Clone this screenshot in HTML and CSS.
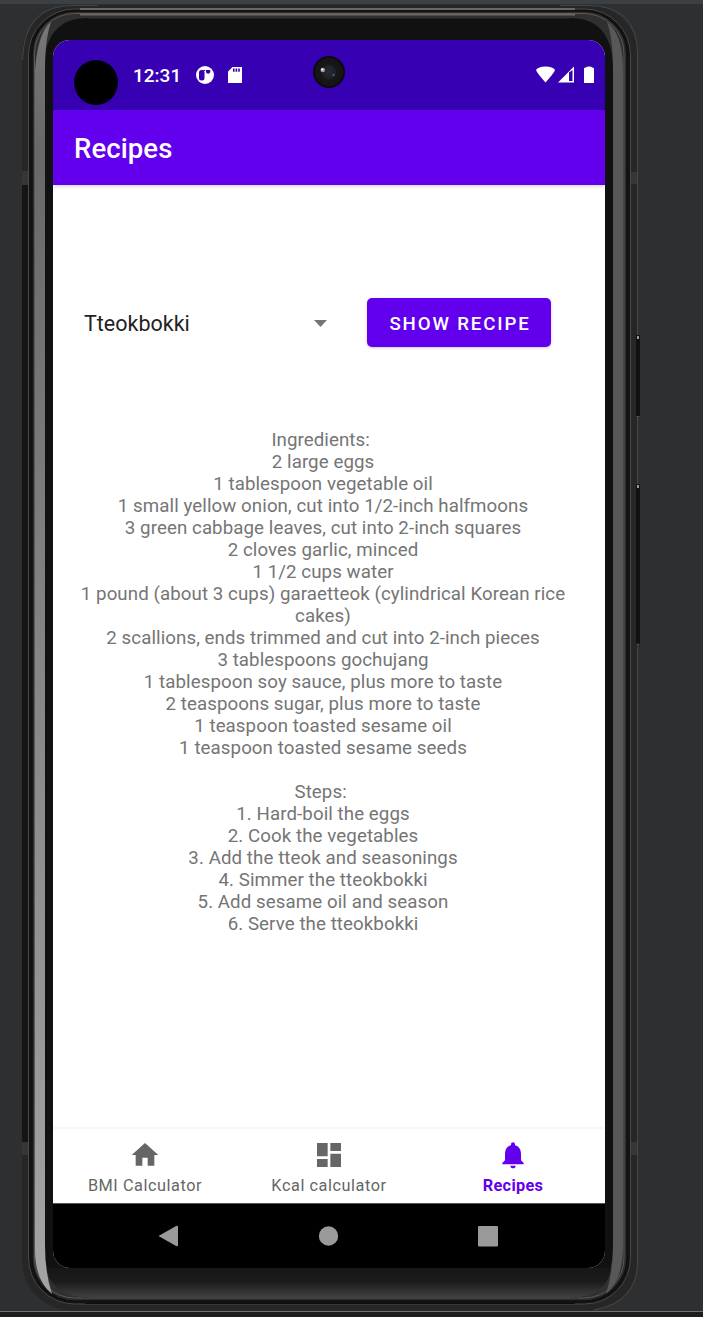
FILE: index.html
```html
<!DOCTYPE html>
<html lang="en">
<head>
<meta charset="utf-8">
<title>Recipes</title>
<link rel="stylesheet" href="styles.css">
</head>
<body>
<div class="stage">
<svg class="device" viewBox="0 0 703 1317" aria-hidden="true">
  <defs>
    <linearGradient id="shine" x2="0" y2="1"><stop offset="0" stop-color="#777"/><stop offset=".1" stop-color="#686868"/><stop offset=".5" stop-color="#858585"/><stop offset="1" stop-color="#a4a4a4"/></linearGradient>
    <linearGradient id="chin" x2="0" y2="1"><stop offset="0" stop-color="#171717"/><stop offset=".45" stop-color="#1b1b1b"/><stop offset="1" stop-color="#424242"/></linearGradient>
    <radialGradient id="lens"><stop offset="0" stop-color="#292934"/><stop offset=".45" stop-color="#202028"/><stop offset=".5" stop-color="#18181a"/><stop offset="1" stop-color="#131313"/></radialGradient>
  </defs>
  <rect width="703" height="4" fill="#3d4042"/>
  <rect x="22" y="5" width="616" height="1305.5" rx="50" fill="#262626"/>
  <path d="M22.500 60Q24 5.500 72 5.500H98M560 5.500H588Q637.500 5.500 637.500 54V1262Q637.500 1302 594 1310" fill="none" stroke="#464646"/>
  <path d="M22 185V1142H28V185Z" fill="#151515"/>
  <path d="M22 171h6v14h-6zM630 172h7v12h-7zM22 1142h6v13h-6zM630 1142h7v13h-7z" fill="#363636"/>
  <rect x="28.500" y="9" width="602" height="1295" rx="46" fill="#141414" stroke="#484848"/>
  <rect x="32" y="11" width="595" height="1290" rx="43" fill="#2c2c2c" stroke="#101010" stroke-width="1.500"/>
  <rect x="34.500" y="13.500" width="589.500" height="1284.500" rx="40" fill="#303030" stroke="#595959"/>
  <path d="M80 9H575M80 14.500H575" fill="none" stroke="#686868" stroke-width="2"/>
  <path d="M44 70Q44 18 88 18H570Q613 18 613 70V1246Q613 1298 568 1298H92Q44 1298 44 1246Z" fill="#111"/>
  <path d="M46 1268H611Q607 1298 568 1298H92Q52 1298 46 1268Z" fill="url(#chin)"/>
  <path d="M35 70Q38 32 51 22Q45 39 45 70V1245Q45 1273 52 1294Q35 1280 35 1250Z" fill="url(#shine)"/>
  <path d="M613 70Q613 38 607 22Q623 34 623 70V1246Q623 1280 606 1294Q613 1272 613 1246Z" fill="#585858"/>
  <path d="M88 18H570" stroke="#333"/>
  <path d="M85 1299.500H575" stroke="#2b2b2b"/>
  <path d="M85 1303.500H575" stroke="#0d0d0d"/>
  <rect x="636" y="335" width="4" height="82" rx="1" fill="#111"/><rect x="637" y="336" width="2" height="3" fill="#999"/><path d="M636.500 416.500h3" stroke="#555"/>
  <rect x="636" y="484" width="4" height="163" rx="1" fill="#111"/><rect x="637" y="485" width="2" height="3" fill="#999"/><path d="M636.500 645h3" stroke="#444" stroke-width="3"/>
  <rect y="1312" width="703" height="5" fill="#1d1d1d"/>
  <rect y="1311" width="703" height="1" fill="#707171"/>
</svg>
<main class="screen">
  <header class="status">
    <span class="cutout"></span>
    <span class="clock">12:31</span>
    <svg class="notify" viewBox="0 0 18 18"><circle cx="9" cy="9" r="9" fill="#fff"/><g fill="#3700b3"><rect x="3" y="4" width="5.500" height="10.500" rx="2.500"/><path d="M10 4h4.300v2a2.200 2.200 0 0 1-4.300 0Z"/><rect x="7.300" y="4" width="2" height="1"/></g></svg>
    <svg class="sd" viewBox="0 0 14 16"><path d="M4.500 0H14V16H0V4.500Z" fill="#fff"/><path d="M5 1.500h1.600v3.300H5zM7.600 1.500h1.600v3.300H7.600zM10.200 1.500h1.600v3.300h-1.600z" fill="#3700b3"/></svg>
    <svg class="camera" viewBox="0 0 32 32"><circle cx="16" cy="16" r="16" fill="#090909"/><circle cx="16" cy="16" r="14.500" fill="url(#lens)"/><circle cx="9.800" cy="14" r="2.300" fill="#9b9b98"/><circle cx="9.300" cy="13.600" r="1" fill="#fff"/><circle cx="20.500" cy="19" r="1.200" fill="#315c96"/></svg>
    <svg class="signals" viewBox="0 0 59 18"><path d="M0 4Q2 .500 9.500 .500T19 4Q18 7 9.500 16.500Q1 7 0 4Z" fill="#fff"/><path fill-rule="evenodd" d="M38 .500V16.500H22ZM33 6.500V15H36.500V4Z" fill="#fff"/><path d="M48 2.500Q48 1.500 50 1.500Q50 .500 53 .500T56 1.500Q58 1.500 58 2.500V17H48Z" fill="#fff"/></svg>
  </header>
  <div class="appbar">Recipes</div>
  <section class="content">
    <div class="controls">
      <div class="spinner"><span>Tteokbokki</span><svg class="caret" viewBox="0 0 13 7"><path d="M0 0H13L6.500 7Z" fill="#757575"/></svg></div>
      <button class="show">SHOW RECIPE</button>
    </div>
    <div class="recipe">Ingredients:&nbsp;
2 large eggs
1 tablespoon vegetable oil
1 small yellow onion, cut into 1/2-inch halfmoons
3 green cabbage leaves, cut into 2-inch squares
2 cloves garlic, minced
1 1/2 cups water
1 pound (about 3 cups) garaetteok (cylindrical Korean rice
cakes)
2 scallions, ends trimmed and cut into 2-inch pieces
3 tablespoons gochujang
1 tablespoon soy sauce, plus more to taste
2 teaspoons sugar, plus more to taste
1 teaspoon toasted sesame oil
1 teaspoon toasted sesame seeds

Steps:&nbsp;
1. Hard-boil the eggs
2. Cook the vegetables
3. Add the tteok and seasonings
4. Simmer the tteokbokki
5. Add sesame oil and season
6. Serve the tteokbokki</div>
  </section>
  <nav class="tabs">
    <div class="tab"><svg viewBox="0 0 24 24"><path d="M10 20v-6h4v6h5v-8h3L12 3 2 12h3v8z"/></svg><span>BMI Calculator</span></div>
    <div class="tab"><svg viewBox="0 0 24 24"><path d="M3 13h8V3H3v10zm0 8h8v-6H3v6zm10 0h8V11h-8v10zm0-18v6h8V3h-8z"/></svg><span>Kcal calculator</span></div>
    <div class="tab active"><svg viewBox="0 0 24 24"><path d="M12 22c1.100 0 2-.9 2-2h-4c0 1.100.89 2 2 2zm6-6v-5c0-3.070-1.640-5.640-4.500-6.320V4c0-.83-.67-1.500-1.500-1.500s-1.500.67-1.500 1.500v.68C7.630 5.360 6 7.920 6 11v5l-2 2v1h16v-1l-2-2z"/></svg><span>Recipes</span></div>
  </nav>
  <footer class="system">
    <svg viewBox="0 0 22 22"><path d="M1.500 11 19.500 .800Q21 .300 21 2V20Q21 21.700 19.500 21.200Z"/></svg>
    <svg viewBox="0 0 22 22"><circle cx="11.500" cy="11" r="9.700"/></svg>
    <svg viewBox="0 0 22 22"><rect x="1" y="1" width="20" height="20.500" rx="1"/></svg>
  </footer>
</main>
</div>
</body>
</html>
```
FILE: styles.css
```css
* { box-sizing: border-box; }
body { margin: 0; background: #2e2f31; font-family: Roboto, "Liberation Sans", sans-serif; }
.stage { position: relative; width: 703px; height: 1317px; padding: 40px 98px 49px 53px; overflow: hidden; }
.device { position: absolute; inset: 0; width: 703px; height: 1317px; }
.screen { position: relative; display: flex; flex-direction: column; width: 552px; height: 1228px; border-radius: 17px; overflow: hidden; background: #fff; }
svg { display: block; flex: none; }
.status { position: relative; display: flex; align-items: center; height: 70px; padding: 0 10px 1px 21px; background: #3700b3; color: #fff; }
.cutout { width: 44px; height: 45px; margin-top: 16px; border-radius: 50%; background: #000; }
.clock { width: 47px; margin: 1px 0 0 15px; font-size: 19px; font-weight: 500; letter-spacing: 0; white-space: nowrap; }
.notify { width: 18px; height: 18px; margin-left: 16px; }
.sd { width: 14px; height: 16px; margin-left: 14px; }
.camera { position: absolute; left: 260px; top: 16px; width: 32px; height: 32px; }
.signals { width: 59px; height: 18px; margin-left: auto; }
.appbar { height: 75px; padding-left: 21px; background: #6200ee; color: #fff; font-size: 27.500px; font-weight: 500; line-height: 78px; letter-spacing: .1px; box-shadow: 0 1px 4px #0003; z-index: 1; }
.content { flex: 1; padding: 113px 0 0; }
.controls { display: flex; align-items: center; height: 49px; padding: 0 54px 0 31px; }
.spinner { display: flex; align-items: center; justify-content: space-between; width: 243px; padding-top: 1px; color: #222; font-size: 21.500px; }
.caret { width: 13px; height: 7px; }
.show { width: 184px; height: 49px; margin-left: 40px; padding: 2px 0 0 2px; border: 0; border-radius: 5px; background: #6200ee; color: #fff; font: 500 18.700px Roboto, sans-serif; letter-spacing: 1.850px; box-shadow: 0 1px 3px #0003; }
.recipe { width: 500px; margin: 82px 0 0 20px; color: #757575; font-size: 18.700px; line-height: 22px; letter-spacing: .08px; text-align: center; white-space: pre; }
.tabs { display: grid; grid-template-columns: repeat(3, 1fr); height: 76px; border-top: 2px solid #f7f7f7; }
.tab { display: flex; flex-direction: column; align-items: center; padding-top: 10px; color: #666; font-size: 16.300px; line-height: 20px; letter-spacing: .55px; }
.tab svg { width: 32px; height: 32px; margin: 0 1px 5px 0; fill: currentColor; }
.active { color: #6200ee; font-weight: 700; letter-spacing: .3px; }
.system { display: flex; justify-content: space-between; height: 65px; padding: 21px 106px 0 104px; background: #000; border-top: 1px solid #555; }
.system svg { width: 22px; height: 22px; fill: #9a9a9a; }
```
